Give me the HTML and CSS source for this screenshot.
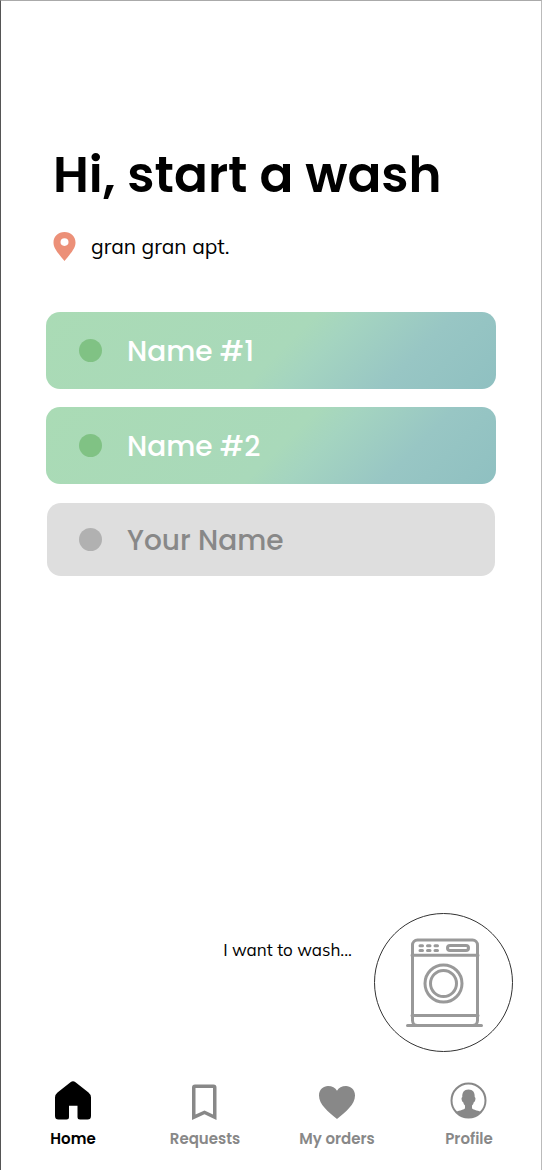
FILE: index.html
```html
<!DOCTYPE html>
<html lang="en">
<head>
<meta charset="utf-8">
<meta name="viewport" content="width=device-width, initial-scale=1">
<title>Start a wash</title>
<link rel="stylesheet" href="styles.css">
</head>
<body>
<div class="screen">
  <main class="content">
    <h1 class="title">Hi, start a wash</h1>
    <p class="location">
      <svg class="pin" viewBox="0 0 22 29" aria-hidden="true"><path fill-rule="evenodd" d="M11 0C4.700 0 0 4.600 0 10.500C0 15.500 3 19.500 11 29C19 19.500 22 15.500 22 10.500C22 4.600 17.300 0 11 0ZM11 6.300A4 3.800 0 1 1 11 13.900A4 3.800 0 1 1 11 6.300Z"/></svg>
      <span>gran gran apt.</span>
    </p>
    <div class="slots">
      <button class="slot" type="button"><span class="dot"></span><span class="name">Name #1</span></button>
      <button class="slot" type="button"><span class="dot"></span><span class="name">Name #2</span></button>
      <button class="slot slot-empty" type="button"><span class="dot"></span><span class="name">Your Name</span></button>
    </div>
  </main>
  <div class="wash">
    <label class="wash-label" for="wash">I want to wash...</label>
    <button class="wash-button" id="wash" type="button">
      <svg class="washer" viewBox="0 0 78 90" aria-hidden="true">
        <rect x="7.500" y="2" width="65" height="85.500" rx="5"/>
        <path d="M7 17.300H73M7 77.500H73M2.500 87.500H76.500"/>
        <rect x="42.500" y="7.500" width="21" height="5" rx="2.500"/>
        <circle cx="38.500" cy="45.500" r="18.500"/>
        <circle cx="38.500" cy="45.500" r="13"/>
        <path d="M15 7.700h2.500M22.500 7.700H25M30 7.700h2.500M15 12.500h2.500M22.500 12.500H25M30 12.500h2.500"/>
      </svg>
    </button>
  </div>
  <nav class="tabs">
    <a class="tab tab-active" href="#home" aria-current="page">
      <svg class="tab-icon" viewBox="0 0 36 40" aria-hidden="true"><path d="M15.500 1.200Q18-.800 20.500 1.200L33.500 11.500Q36 13.500 36 16.500V35Q36 38.500 32.500 38.500H25Q22.500 38.500 22.500 36V24.700H14V36Q14 38.500 11.500 38.500H3.500Q0 38.500 0 35V16.500Q0 13.500 2.500 11.500Z"/></svg>
      <span>Home</span>
    </a>
    <a class="tab" href="#requests">
      <svg class="tab-icon" viewBox="0 0 36 40" aria-hidden="true"><path fill-rule="evenodd" d="M8 3.500H26.500Q29.500 3.500 29.500 6.500V39L17.500 33.300L5 39V6.500Q5 3.500 8 3.500ZM8.500 7V33.500L17.500 29.500L26 33.500V7Z"/></svg>
      <span>Requests</span>
    </a>
    <a class="tab" href="#orders">
      <svg class="tab-icon" viewBox="0 0 36 40" aria-hidden="true"><path d="M18 38C9 30.500 0 23.500 0 14.500C0 8.500 4.500 5 9 5C13 5 16.500 7 18 9.700C19.500 7 23 5 27 5C31.500 5 36 8.500 36 14.500C36 23.500 27 30.500 18 38Z"/></svg>
      <span>My orders</span>
    </a>
    <a class="tab" href="#profile">
      <svg class="tab-icon" viewBox="0 0 36 40" aria-hidden="true"><circle class="ring" cx="17.500" cy="19.500" r="17"/><path d="M17.500 8.500C22 8.500 24 11.500 23.700 16Q25 16.500 24.300 19Q24 21 22.800 21.300Q22.300 23.500 21 24.500V27C21.500 29 26 29 30 31Q25 37 17.500 37T5 31C9 29 13.500 29 14 27V24.500Q12.700 23.500 12.200 21.300Q11 21 10.700 19Q10 16.500 11.300 16C11 11.500 13 8.500 17.500 8.500Z"/></svg>
      <span>Profile</span>
    </a>
  </nav>
</div>
</body>
</html>
```
FILE: styles.css
```css
* {
  box-sizing: border-box;
}

body {
  margin: 0;
  background: #fff;
  color: #000;
  font-family: Poppins, Inter, sans-serif;
}

.screen {
  display: flex;
  flex-direction: column;
  min-height: 100vh;
  border: 1px solid #555;
  border-top-color: #aaa;
  border-right-color: #bbb;
  border-bottom: 0;
}

.content {
  flex: 1;
  padding: 138px 45px 0;
}

.title {
  margin: 0 0 20px;
  padding-left: 7px;
  font-size: 50px;
  line-height: 72px;
  font-weight: 600;
}

.location {
  display: flex;
  align-items: center;
  gap: 15px;
  margin: 0 0 51px;
  padding-left: 7px;
  font-family: Muli, Mulish, Nunito, Lato, sans-serif;
  font-size: 21px;
  line-height: 30px;
}

.pin {
  width: 23px;
  height: 29px;
  fill: #ec9078;
}

.slots {
  display: flex;
  flex-direction: column;
  gap: 18px;
}

.slot {
  display: flex;
  align-items: center;
  gap: 25px;
  height: 77px;
  padding: 0 33px;
  border: 0;
  border-radius: 14px;
  background: linear-gradient(135deg, #aadbb5 0%, #a9d9ba 52%, #a4d4c0 60%, #98c6c4 78%, #8fc0c1 100%);
  color: #fff;
  font-family: inherit;
  font-size: 28px;
  font-weight: 500;
  text-align: left;
}

.slot-empty {
  height: 73px;
  margin: 1px 1px 0;
  padding: 0 32px;
  background: #dedede;
  color: #888;
}

.dot {
  width: 23px;
  height: 23px;
  border-radius: 50%;
  background: #80c284;
}

.name {
  padding-top: 2px;
}

.slot-empty .dot {
  background: #b1b1b1;
}

.wash {
  display: flex;
  justify-content: flex-end;
  gap: 22px;
  padding-right: 28px;
}

.wash-label {
  padding-top: 25px;
  font-family: Muli, Mulish, Nunito, Lato, sans-serif;
  font-size: 17px;
  line-height: 24px;
}

.wash-button {
  display: grid;
  place-items: center;
  width: 139px;
  height: 139px;
  padding: 0;
  border: 1px solid #333;
  border-radius: 50%;
  background: none;
}

.washer {
  width: 78px;
  height: 90px;
  fill: none;
  stroke: #999;
  stroke-width: 3;
  stroke-linecap: round;
}

.tabs {
  display: grid;
  grid-template-columns: repeat(4, 1fr);
  padding: 29px 6px 19px;
}

.tab {
  display: flex;
  flex-direction: column;
  align-items: center;
  gap: 6px;
  color: #888;
  font-size: 15px;
  line-height: 24px;
  font-weight: 600;
  text-decoration: none;
}

.tab-active {
  color: #000;
}

.tab-icon {
  width: 36px;
  height: 40px;
  overflow: visible;
  fill: currentColor;
}

.ring {
  fill: none;
  stroke: currentColor;
  stroke-width: 2;
}
```
